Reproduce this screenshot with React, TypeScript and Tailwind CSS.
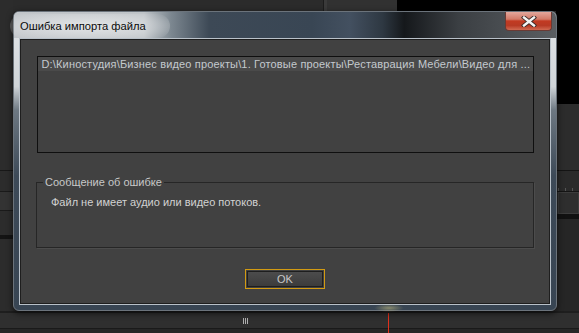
import React from 'react'

const ui = { fontFamily: '"Liberation Sans", Arial, sans-serif' }

const CloseIcon = () => (
  <svg width="16" height="11" viewBox="0 0 16 11">
    <path d="M3 1.5 L13 9.5 M13 1.5 L3 9.5" stroke="#3a2a28" strokeWidth="4.2" strokeLinecap="square" />
    <path d="M3 1.5 L13 9.5 M13 1.5 L3 9.5" stroke="#f4f4f4" strokeWidth="2.4" strokeLinecap="square" />
  </svg>
)

const Backdrop = () => (
  <div className="flex flex-col w-[579px] h-[333px] bg-[#2b2b2b]">
    <div className="flex flex-row h-[311px]">
      <div className="flex flex-col w-[13px] bg-[#2c2c2c]">
        <div className="h-[170px]" />
        <div className="h-px bg-[#181818]" />
        <div className="h-[20px]" />
        <div className="h-px bg-[#1a1a1a]" />
        <div className="h-[18px] bg-[#333]" />
        <div className="h-px bg-[#1a1a1a]" />
        <div className="h-[24px]" />
        <div className="h-[4px] bg-[#141414]" />
      </div>
      <div className="flex-1 flex flex-col">
        <div className="flex flex-row h-[11px]">
          <div className="w-[310px] bg-[#2b2b2b]" />
          <div className="w-px bg-[#1c1c1c]" />
          <div className="w-[3px] bg-[#3a3a3a]" />
          <div className="w-[70px] bg-[#313131]" />
          <div className="flex-1 bg-black" />
        </div>
      </div>
      <div className="flex flex-col w-[23px]">
        <div className="h-[104px] bg-black" />
        <div className="h-[66px] bg-[#2c2c2c]" />
        <div className="h-px bg-[#141414]" />
        <div className="h-[20px] bg-[#2a2a2a] flex items-end gap-[6px] pl-[2px]">
          <div className="w-px h-[3px] bg-[#555]" />
          <div className="w-px h-[3px] bg-[#555]" />
          <div className="w-px h-[3px] bg-[#555]" />
        </div>
        <div className="h-px bg-[#141414]" />
        <div className="h-[22px] bg-[#2e2e2e] border border-[#3c3c3c] ml-[2px]" />
        <div className="h-[5px] bg-[#111]" />
        <div className="flex-1 bg-[#262626]" />
      </div>
    </div>
    <div className="flex flex-col h-[22px] bg-[#2a2a2a] relative">
      <div className="h-[2px] bg-[#1e1e1e]" />
      <div className="flex-1 bg-[#2f2f2f] flex items-center gap-px pl-[243px]">
        <div className="w-px h-[6px] bg-[#b0b0b0]" />
        <div className="w-px h-[6px] bg-[#b0b0b0]" />
        <div className="w-px h-[6px] bg-[#b0b0b0]" />
      </div>
      <div className="h-px bg-[#1a1a1a]" />
      <div className="h-[4px] bg-[#262626]" />
      <div className="absolute left-[388px] top-[2px] bottom-0 w-px bg-[#e0301c]" />
    </div>
  </div>
)

export default function App() {
  return (
    <div className="relative w-[579px] h-[333px] overflow-hidden" style={ui}>
      <Backdrop />
      {/* dialog window */}
      <div className="absolute left-[13px] top-[11px] w-[544px] h-[300px] rounded-[6px] border border-[#6b737b] bg-[linear-gradient(180deg,#e4e7ea_0%,#cfd4d8_25%,#6d7882_33%,#3d4a58_55%,#384553_100%)] flex flex-col shadow-[0_2px_6px_rgba(0,0,0,0.7)]">
        <div className="h-[26px] flex flex-row rounded-t-[5px] bg-[linear-gradient(90deg,#c2c6ca_0%,#bfc4c8_24%,#7c8790_29%,#3d4956_36%,#394654_55%,#435060_62%,#2e3842_68%,#15181b_72%,#3b3f43_82%,#5a5e62_100%)] relative">
          <div className="absolute left-[-4px] top-[2px] w-[160px] h-[24px] rounded-[12px] bg-[radial-gradient(ellipse_at_center,rgba(255,255,255,0.55)_0%,rgba(255,255,255,0.25)_60%,rgba(255,255,255,0)_100%)]" />
          <div className="relative pl-[6px] pt-[7px] text-[11.2px] leading-[14px] text-[#0b0b0b]">Ошибка импорта файла</div>
          <div className="flex-1" />
          <div className="mr-[4px] w-[47px] h-[19px] rounded-b-[4px] border border-[#6a3a34] border-t-0 bg-[linear-gradient(180deg,#e3a79c_0%,#d27a68_40%,#c23a22_50%,#b83a24_75%,#d06a52_100%)] flex items-center justify-center">
            <CloseIcon />
          </div>
        </div>
        <div className="flex-1 mx-[5px] mb-[5px] border border-[#b9c1c9] bg-[#1e1e1e] p-px">
          <div className="h-full bg-[#414141] flex flex-col items-center pt-[16px]">
            <div className="w-[497px] h-[97px] border border-[#0f0f0f] bg-[#414141]">
              <div className="h-[14px] bg-[#4a4a4a] pl-[4px] text-[11px] leading-[14px] tracking-[0.16px] text-[#c4c9ce] whitespace-nowrap overflow-hidden">
                D:\Киностудия\Бизнес видео проекты\1. Готовые проекты\Реставрация Мебели\Видео для ...
              </div>
            </div>
            <div className="relative mt-[29px] w-[498px] h-[66px] border border-[#262626] shadow-[1px_1px_0_#4c4c4c]">
              <div className="absolute left-[6px] top-[-8px] px-[2px] bg-[#414141] text-[11px] leading-[14px] text-[#c8c8c8]">Сообщение об ошибке</div>
              <div className="pl-[14px] pt-[12px] text-[11px] leading-[14px] text-[#d2d2d2]">Файл не имеет аудио или видео потоков.</div>
            </div>
            <div className="mt-[21px] w-[80px] h-[20px] border border-[#d39b12] p-px">
              <div className="h-full border border-[#1e1e1e] bg-[linear-gradient(180deg,#4c4c4c_0%,#3c3c3c_100%)] flex items-center justify-center text-[11px] text-[#c8c8c8]">OK</div>
            </div>
          </div>
        </div>
        <div className="absolute left-[360px] bottom-[-2px] w-[30px] h-[8px] rounded-full bg-[radial-gradient(ellipse_at_center,rgba(230,220,140,0.45)_0%,rgba(230,220,140,0)_70%)]" />
      </div>
    </div>
  )
}
